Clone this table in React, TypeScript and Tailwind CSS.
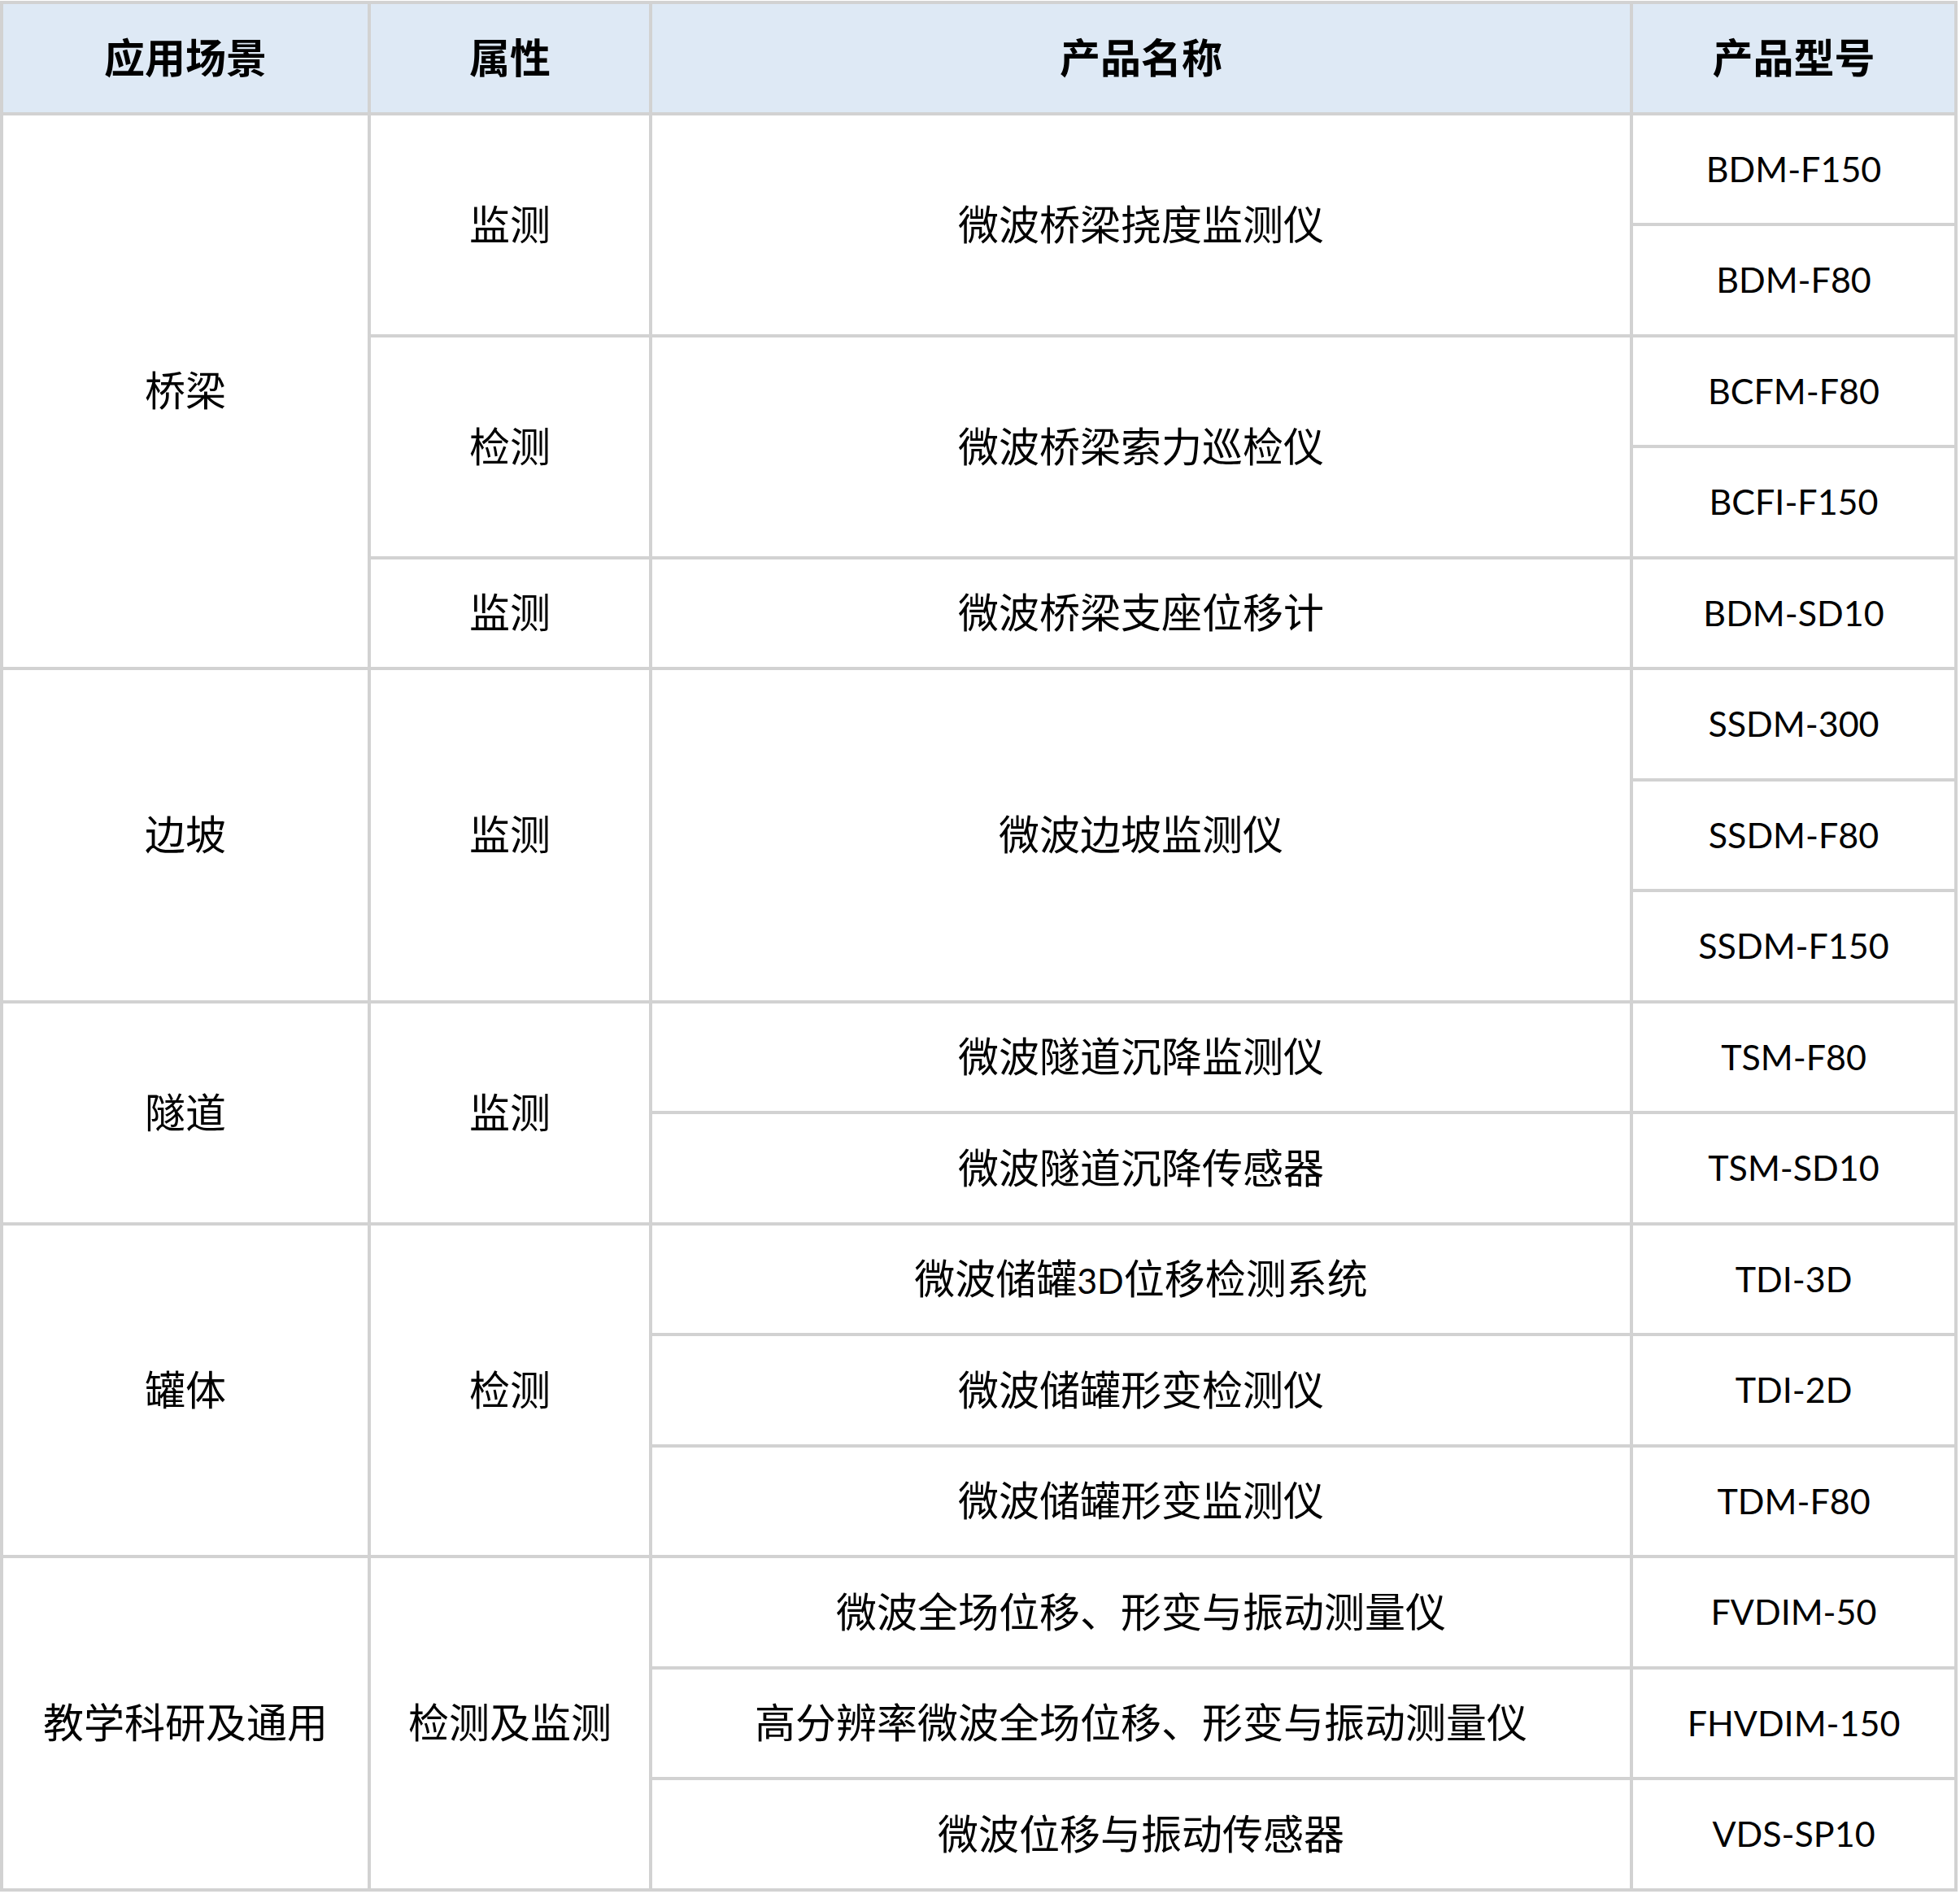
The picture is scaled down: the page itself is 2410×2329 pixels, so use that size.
import React from "react";

type Row = { name?: React.ReactNode; nameSpan?: number; model: string };
type Attr = { label: string; rows: Row[] };
type Group = { scene: string; attrs: Attr[] };

const data: Group[] = [
  {
    scene: "桥梁",
    attrs: [
      {
        label: "监测",
        rows: [
          { name: "微波桥梁挠度监测仪", nameSpan: 2, model: "BDM-F150" },
          { model: "BDM-F80" },
        ],
      },
      {
        label: "检测",
        rows: [
          { name: "微波桥梁索力巡检仪", nameSpan: 2, model: "BCFM-F80" },
          { model: "BCFI-F150" },
        ],
      },
      { label: "监测", rows: [{ name: "微波桥梁支座位移计", nameSpan: 1, model: "BDM-SD10" }] },
    ],
  },
  {
    scene: "边坡",
    attrs: [
      {
        label: "监测",
        rows: [
          { name: "微波边坡监测仪", nameSpan: 3, model: "SSDM-300" },
          { model: "SSDM-F80" },
          { model: "SSDM-F150" },
        ],
      },
    ],
  },
  {
    scene: "隧道",
    attrs: [
      {
        label: "监测",
        rows: [
          { name: "微波隧道沉降监测仪", nameSpan: 1, model: "TSM-F80" },
          { name: "微波隧道沉降传感器", nameSpan: 1, model: "TSM-SD10" },
        ],
      },
    ],
  },
  {
    scene: "罐体",
    attrs: [
      {
        label: "检测",
        rows: [
          {
            name: (
              <>
                微波储罐<span className="text-[43px]">3D</span>位移检测系统
              </>
            ),
            nameSpan: 1,
            model: "TDI-3D",
          },
          { name: "微波储罐形变检测仪", nameSpan: 1, model: "TDI-2D" },
          { name: "微波储罐形变监测仪", nameSpan: 1, model: "TDM-F80" },
        ],
      },
    ],
  },
  {
    scene: "教学科研及通用",
    attrs: [
      {
        label: "检测及监测",
        rows: [
          { name: "微波全场位移、形变与振动测量仪", nameSpan: 1, model: "FVDIM-50" },
          { name: "高分辨率微波全场位移、形变与振动测量仪", nameSpan: 1, model: "FHVDIM-150" },
          { name: "微波位移与振动传感器", nameSpan: 1, model: "VDS-SP10" },
        ],
      },
    ],
  },
];

const cell = "bg-white text-center align-middle h-[132.5px] p-0 text-black";

export default function App() {
  return (
    <div className="min-h-screen bg-white pt-[1px] font-['Lato','Noto_Sans_CJK_SC',sans-serif]">
      <table className="table-fixed border-separate border-spacing-[4px] bg-[#d2d2d2] w-[2407px]">
        <colgroup>
          <col className="w-[448px]" />
          <col className="w-[342px]" />
          <col className="w-[1202px]" />
          <col className="w-[395px]" />
        </colgroup>
        <thead>
          <tr>
            {["应用场景", "属性", "产品名称", "产品型号"].map((h) => (
              <th
                key={h}
                className="bg-[#dee9f5] h-[132.5px] p-0 text-center align-middle text-[50px] font-bold text-black"
              >
                {h}
              </th>
            ))}
          </tr>
        </thead>
        <tbody>
          {data.map((g) => {
            const total = g.attrs.reduce((n, a) => n + a.rows.length, 0);
            return g.attrs.map((a, ai) =>
              a.rows.map((r, ri) => (
                <tr key={`${g.scene}-${ai}-${ri}`}>
                  {ai === 0 && ri === 0 && (
                    <td rowSpan={total} className={`${cell} text-[50px]`}>
                      {g.scene}
                    </td>
                  )}
                  {ri === 0 && (
                    <td rowSpan={a.rows.length} className={`${cell} text-[50px]`}>
                      {a.label}
                    </td>
                  )}
                  {r.name !== undefined && (
                    <td rowSpan={r.nameSpan} className={`${cell} text-[50px]`}>
                      {r.name}
                    </td>
                  )}
                  <td className={`${cell} text-[43px]`}>{r.model}</td>
                </tr>
              ))
            );
          })}
        </tbody>
      </table>
    </div>
  );
}
